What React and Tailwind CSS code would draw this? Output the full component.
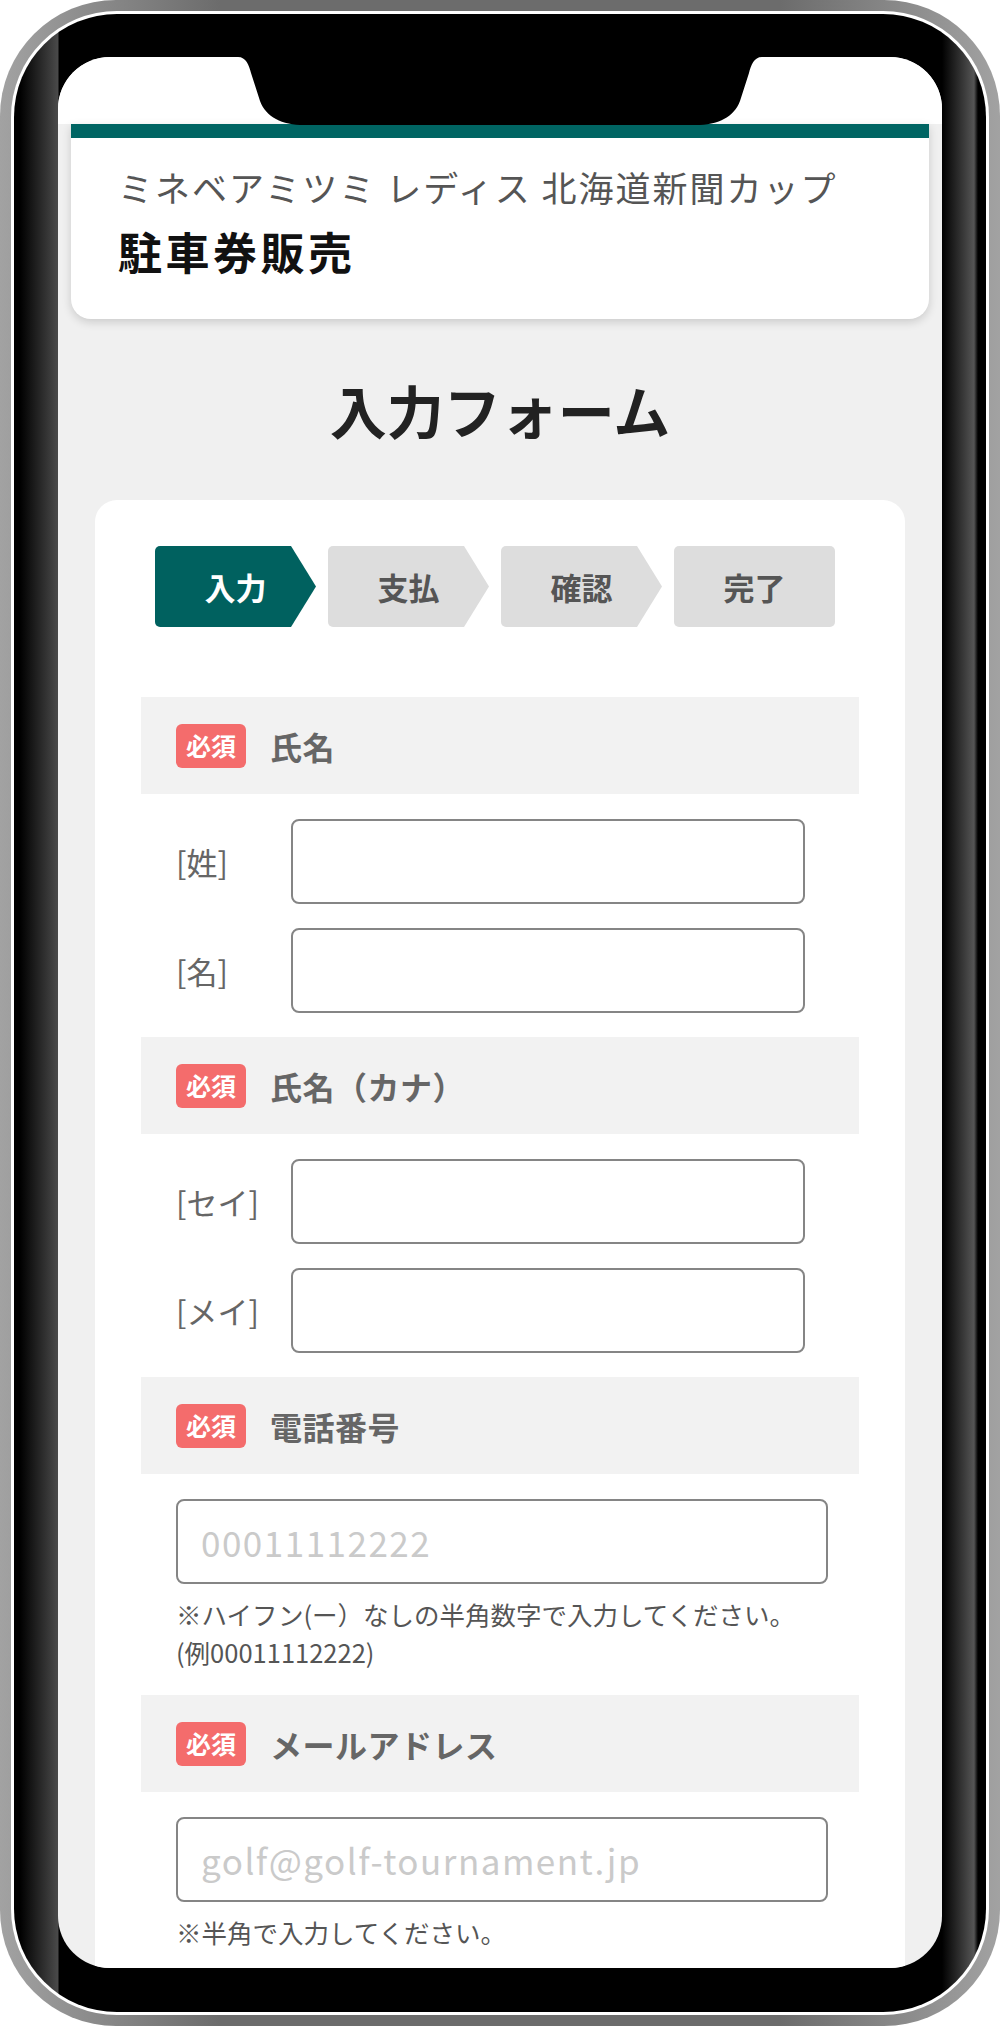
const steps = ["入力", "支払", "確認", "完了"];

function Badge() {
  return (
    <span className="flex h-[44px] w-[70px] shrink-0 items-center justify-center rounded-[6px] bg-[#f46c6c] text-[25px] font-bold leading-none text-white">
      必須
    </span>
  );
}

function SectionHead({ label }) {
  return (
    <div className="flex h-[97px] items-center bg-[#f2f2f2] pl-[35px]">
      <Badge />
      <span className="ml-[24px] text-[32px] font-bold leading-none tracking-[0.5px] text-[#666]">
        {label}
      </span>
    </div>
  );
}

function NameRow({ label }) {
  return (
    <div className="flex items-center">
      <span className="w-[115px] text-[31px] leading-none text-[#666]">{label}</span>
      <input
        type="text"
        className="h-[85px] w-[514px] rounded-[8px] border-2 border-[#858585] bg-white px-[23px] text-[34px] outline-none"
      />
    </div>
  );
}

function Step({ label, active, last }) {
  const shape = last
    ? "rounded-[5px]"
    : "rounded-l-[5px] [clip-path:polygon(0_0,calc(100%_-_25px)_0,100%_50%,calc(100%_-_25px)_100%,0_100%)]";
  const color = active ? "bg-[#00615f] text-white" : "bg-[#dddddd] text-[#555]";
  return (
    <div
      className={`flex h-[81px] w-[161px] items-center justify-center text-[31px] font-bold leading-none ${shape} ${color}`}
    >
      {label}
    </div>
  );
}

export default function App() {
  return (
    <div className="h-[2026px] w-[1000px] bg-white font-['Noto_Sans_CJK_JP','Noto_Sans',sans-serif]">
      {/* phone rim */}
      <div className="h-full rounded-[116px] bg-[linear-gradient(to_right,#a2a2a2,#6c6c6c_22%,#6c6c6c_78%,#a2a2a2)] p-[11px]">
        <div className="h-full rounded-[106px] bg-white p-[3px]">
          <div className="h-full rounded-[103px] bg-[linear-gradient(to_right,#000_0px,#000_6px,#4a4a4a_44px,#000_45px,#000_928px,#555_960px,#000_964px,#000_100%)] pb-[44px] pl-[44px] pr-[44px] pt-[43px]">
            {/* screen */}
            <div className="relative h-full overflow-hidden rounded-[52px] bg-[#f0f0f0]">
              <svg
                className="absolute left-1/2 top-0 z-10 -translate-x-1/2"
                width="524"
                height="68"
                viewBox="0 0 524 68"
              >
                <path
                  d="M0 0 C8 0 11 8 13 16 L22 44 C28 60 44 68 66 68 H458 C480 68 496 60 502 44 L511 16 C513 8 516 0 524 0 Z"
                  fill="#000"
                />
              </svg>

              <div className="h-[67px] bg-white" />

              {/* event header */}
              <div className="mx-[13px] rounded-b-[20px] border-t-[14px] border-[#006563] bg-white pb-[38px] pl-[47px] pt-[23px] shadow-[0_3px_10px_rgba(0,0,0,0.16)]">
                <p className="text-[35px] leading-[52px] tracking-[2px] text-[#555]">
                  ミネベアミツミ レディス 北海道新聞カップ
                </p>
                <p className="mt-[8px] text-[44px] font-bold leading-[60px] tracking-[3.5px] text-[#111]">
                  駐車券販売
                </p>
              </div>

              <h1 className="mb-[49px] mt-[48px] text-center text-[57px] font-bold leading-[84px] text-[#222]">
                入力フォーム
              </h1>

              {/* form */}
              <div className="mx-[37px] rounded-t-[22px] bg-white px-[46px] pb-[200px] pt-[46px]">
                <div className="flex gap-[12px] pl-[14px]">
                  {steps.map((s, i) => (
                    <Step key={s} label={s} active={i === 0} last={i === steps.length - 1} />
                  ))}
                </div>

                <div className="mt-[70px]">
                  <SectionHead label="氏名" />
                  <div className="flex flex-col gap-[24px] px-[35px] pb-[24px] pt-[25px]">
                    <NameRow label="[姓]" />
                    <NameRow label="[名]" />
                  </div>

                  <SectionHead label="氏名（カナ）" />
                  <div className="flex flex-col gap-[24px] px-[35px] pb-[24px] pt-[25px]">
                    <NameRow label="[セイ]" />
                    <NameRow label="[メイ]" />
                  </div>

                  <SectionHead label="電話番号" />
                  <div className="px-[35px] pb-[24px] pt-[25px]">
                    <input
                      type="tel"
                      placeholder="00011112222"
                      className="h-[85px] w-[652px] rounded-[8px] border-2 border-[#858585] bg-white px-[23px] text-[35px] tracking-[1.5px] outline-none placeholder:text-[#cacaca]"
                    />
                    <p className="mt-[11px] text-[25.5px] leading-[38px] text-[#555]">
                      ※ハイフン(ー）なしの半角数字で入力してください。
                      <br />
                      (例00011112222)
                    </p>
                  </div>

                  <SectionHead label="メールアドレス" />
                  <div className="px-[35px] pb-[24px] pt-[25px]">
                    <input
                      type="email"
                      placeholder="golf@golf-tournament.jp"
                      className="h-[85px] w-[652px] rounded-[8px] border-2 border-[#858585] bg-white px-[23px] text-[35px] tracking-[1.5px] outline-none placeholder:text-[#cacaca]"
                    />
                    <p className="mt-[11px] text-[25.5px] leading-[38px] text-[#555]">
                      ※半角で入力してください。
                    </p>
                  </div>
                </div>
              </div>
            </div>
          </div>
        </div>
      </div>
    </div>
  );
}
